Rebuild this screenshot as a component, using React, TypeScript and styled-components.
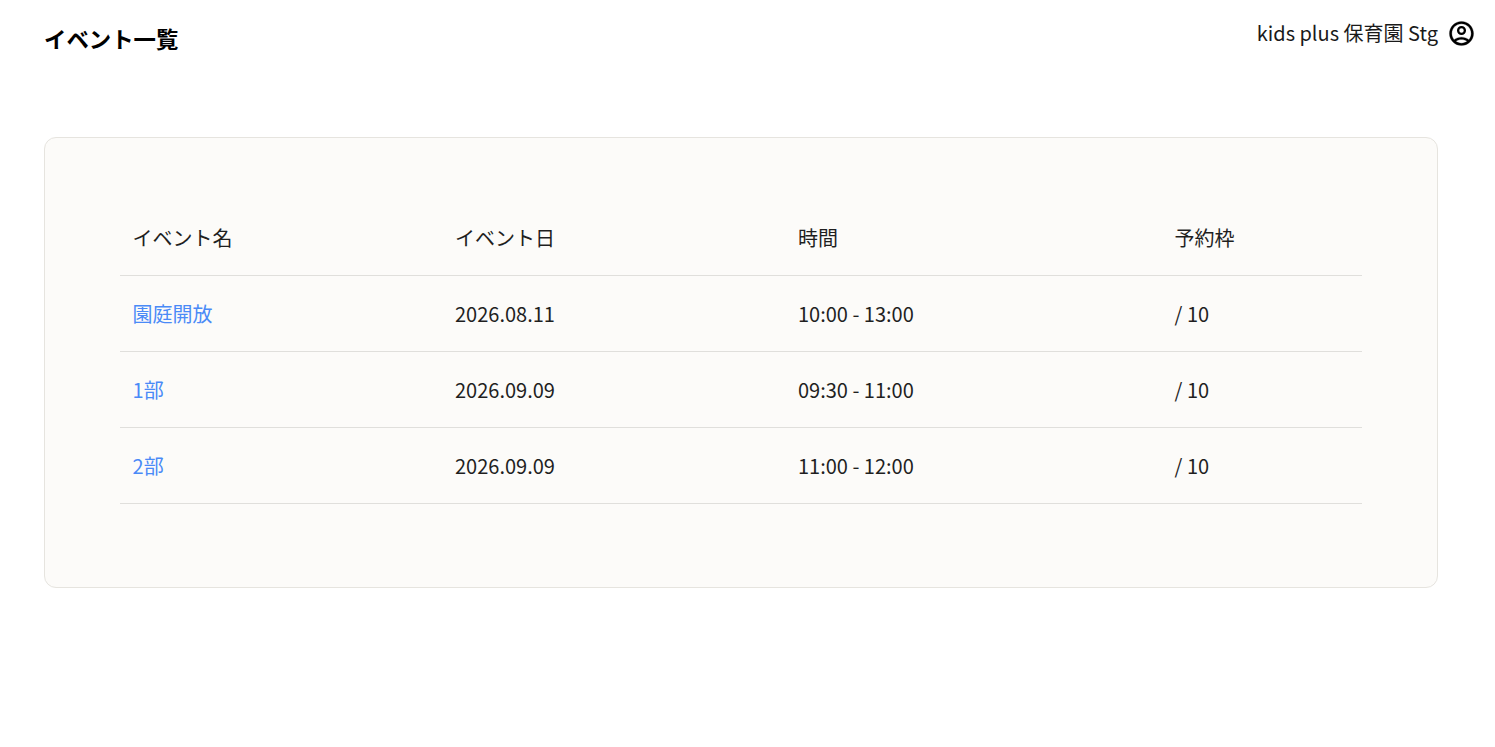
import React from 'react';
import styled, { createGlobalStyle } from 'styled-components';

const GlobalStyle = createGlobalStyle`
  body {
    margin: 0;
    background: #fff;
    color: #1f1f1f;
    font-family: "Noto Sans CJK JP", "Noto Sans", sans-serif;
  }
`;

const Page = styled.div`
  min-height: 747px;
  padding: 0 57px 0 44px;
`;

const Header = styled.header`
  position: relative;
  height: 137px;
`;

const Title = styled.h1`
  margin: 0;
  padding-top: 21px;
  font-size: 22.4px;
  line-height: 34px;
  font-weight: 700;
  color: #000;
`;

const Account = styled.div`
  position: absolute;
  top: 16px;
  right: -37.5px;
  display: flex;
  align-items: center;
  gap: 8.5px;
  font-size: 20px;
  line-height: 34px;
  color: #1a1a1a;
`;

const IconSvg = styled.svg`
  width: 29px;
  height: 29px;
  fill: #000;
  stroke: #000;
  stroke-width: 0.2;
`;

const IconHead = styled.circle`
  fill: none;
  stroke-width: 1.9;
`;

const AccountIcon = () => (
  <IconSvg viewBox="0 0 24 24">
    <path d="M12 2C6.48 2 2 6.48 2 12s4.48 10 10 10 10-4.48 10-10S17.52 2 12 2zM7.35 18.5C8.66 17.56 10.26 17 12 17s3.34.56 4.65 1.5c-1.31.94-2.91 1.5-4.65 1.5s-3.34-.56-4.65-1.5zm10.79-1.38C16.45 15.8 14.32 15 12 15s-4.45.8-6.14 2.12C4.7 15.73 4 13.95 4 12c0-4.42 3.58-8 8-8s8 3.58 8 8c0 1.95-.7 3.73-1.86 5.12z" />
    <IconHead cx={12} cy={9.5} r={2.8} />
  </IconSvg>
);

const Card = styled.section`
  box-sizing: border-box;
  height: 451px;
  padding: 62px 75px 0;
  background: #fcfbf9;
  border: 1px solid #e6e4df;
  border-radius: 12px;
`;

const Table = styled.table`
  width: 1242px;
  table-layout: fixed;
  border-collapse: collapse;
  font-size: 20px;
`;

const Column = styled.col<{ $width: number }>`
  width: ${(p) => p.$width}px;
`;

const Cell = styled.td`
  height: 75px;
  padding: 0 12.6px;
  border-bottom: 1px solid #e0dfdc;
  text-align: left;
  font-weight: 400;
  color: #1f1f1f;
`;

const HeadCell = styled(Cell).attrs({ as: 'th' })``;

const EventLink = styled.a`
  color: #4a8af7;
  text-decoration: none;
`;

const events = [
  { name: '園庭開放', date: '2026.08.11', time: '10:00 - 13:00', slots: '/ 10' },
  { name: '1部', date: '2026.09.09', time: '09:30 - 11:00', slots: '/ 10' },
  { name: '2部', date: '2026.09.09', time: '11:00 - 12:00', slots: '/ 10' },
];

export default function App() {
  return (
    <Page>
      <GlobalStyle />
      <Header>
        <Title>イベント一覧</Title>
        <Account>
          <span>kids plus 保育園 Stg</span>
          <AccountIcon />
        </Account>
      </Header>
      <Card>
        <Table>
          <colgroup>
            <Column $width={322.4} />
            <Column $width={343} />
            <Column $width={376.6} />
            <Column $width={200} />
          </colgroup>
          <thead>
            <tr>
              <HeadCell>イベント名</HeadCell>
              <HeadCell>イベント日</HeadCell>
              <HeadCell>時間</HeadCell>
              <HeadCell>予約枠</HeadCell>
            </tr>
          </thead>
          <tbody>
            {events.map((e) => (
              <tr key={e.name}>
                <Cell>
                  <EventLink href="#">{e.name}</EventLink>
                </Cell>
                <Cell>{e.date}</Cell>
                <Cell>{e.time}</Cell>
                <Cell>{e.slots}</Cell>
              </tr>
            ))}
          </tbody>
        </Table>
      </Card>
    </Page>
  );
}
